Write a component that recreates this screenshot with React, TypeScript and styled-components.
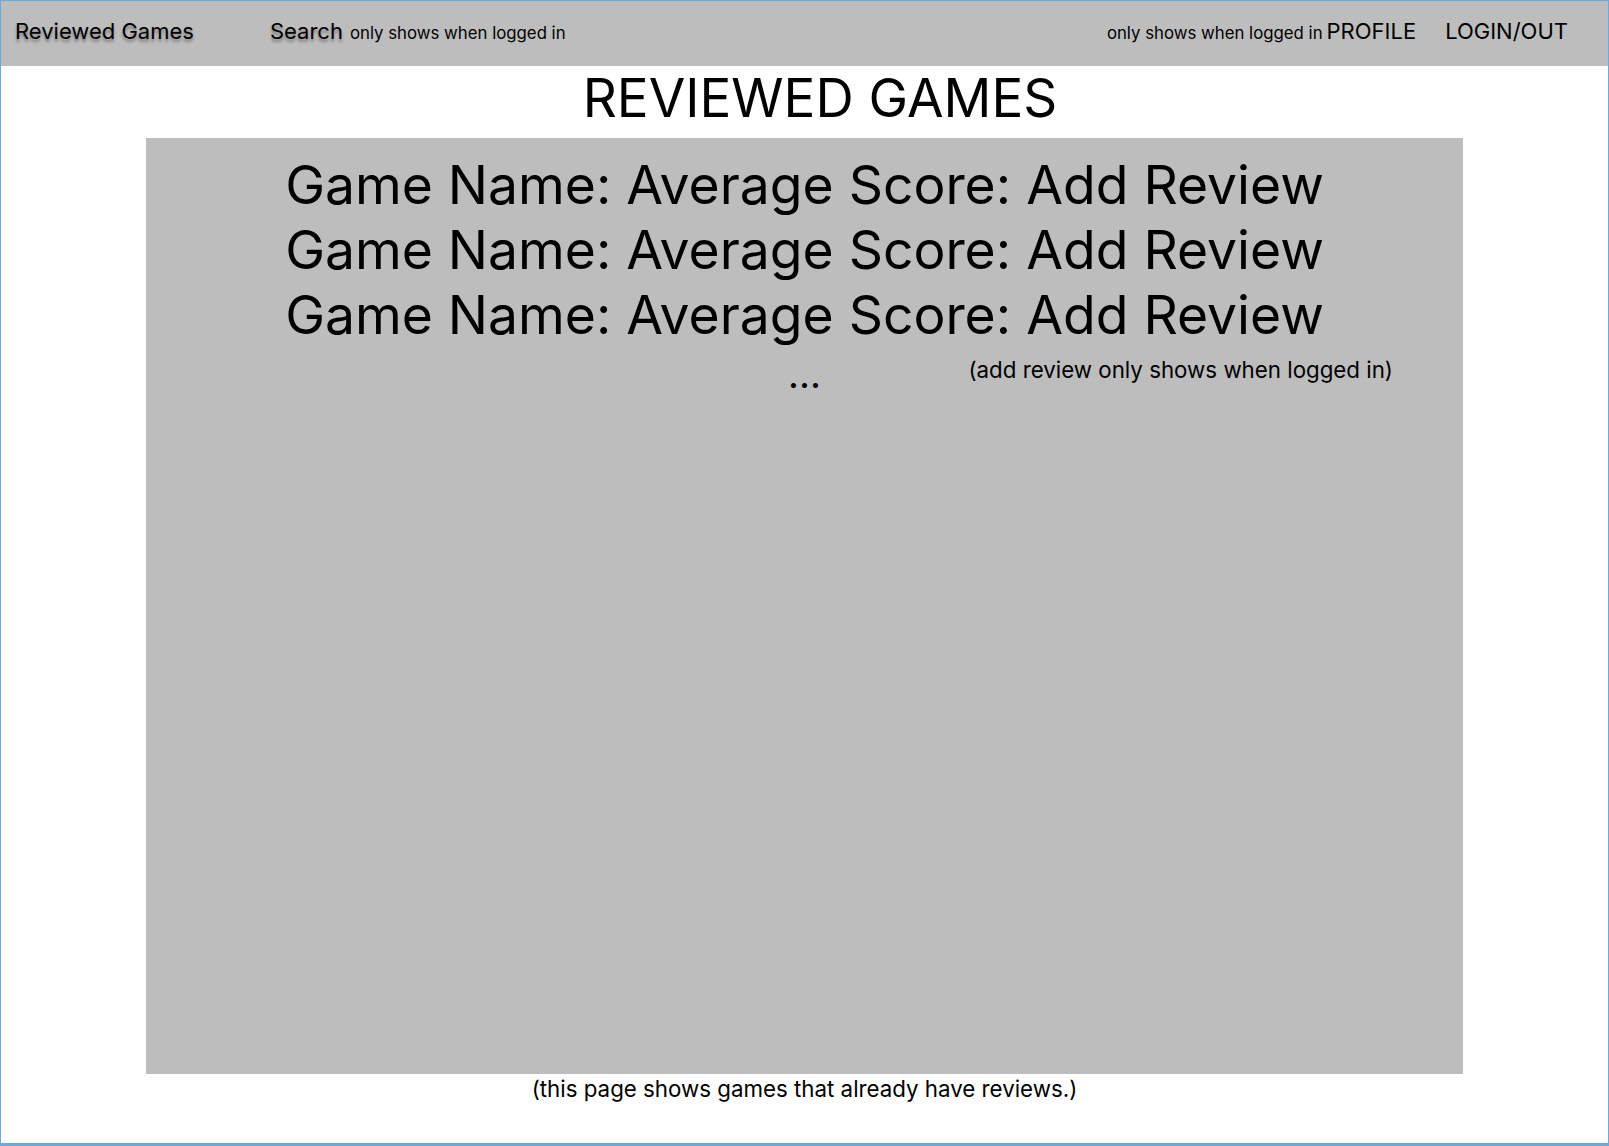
import React from "react";
import styled, { createGlobalStyle } from "styled-components";

const GlobalStyle = createGlobalStyle`
  * {
    box-sizing: border-box;
  }
  body {
    margin: 0;
    background: #ffffff;
    font-family: Inter, "Noto Sans", sans-serif;
    color: #000000;
  }
`;

const Page = styled.div`
  min-height: 100vh;
  border: 1px solid #6fa8dc;
  border-bottom-width: 3px;
  display: flex;
  flex-direction: column;
  align-items: center;
`;

const NavBar = styled.nav`
  width: 100%;
  height: 65px;
  background-color: #bdbdbd;
  display: flex;
  align-items: center;
  justify-content: space-between;
  padding: 0 40px 6px 14px;
`;

const NavGroup = styled.div`
  display: flex;
  align-items: baseline;
`;

const NavLink = styled.span<{ $shadow?: boolean; $gap?: number }>`
  font-size: 22px;
  margin-left: ${(props) => props.$gap || 0}px;
  text-shadow: ${(props) =>
    props.$shadow ? "0 3px 3px rgba(0, 0, 0, 0.35)" : "none"};
`;

const NavHint = styled.span<{ $gap?: number }>`
  font-size: 16.8px;
  margin-left: ${(props) => props.$gap || 0}px;
  margin-right: 4px;
`;

const Title = styled.h1`
  margin: 0 0 7px;
  padding-left: 31px;
  font-size: 53px;
  font-weight: 400;
  line-height: 65px;
  text-align: center;
`;

const GamesPanel = styled.section`
  width: 1317px;
  height: 936px;
  background-color: #bdbdbd;
  padding: 14px 70px 0;
  display: flex;
  flex-direction: column;
  align-items: center;
`;

const GameRow = styled.div`
  font-size: 53.4px;
  line-height: 65px;
`;

const MoreRow = styled.div`
  width: 100%;
  margin-top: 9px;
  display: grid;
  grid-template-columns: 1fr auto 1fr;
`;

const Dots = styled.span`
  grid-column: 2;
  font-size: 38px;
  line-height: 24px;
  padding-top: 6px;
`;

const PanelNote = styled.span`
  grid-column: 3;
  justify-self: end;
  font-size: 22.3px;
  line-height: 27px;
`;

const FooterNote = styled.p`
  margin: 1px 0 0;
  font-size: 22.3px;
  line-height: 27px;
`;

const games = [1, 2, 3];

function App() {
  return (
    <>
      <GlobalStyle />
      <Page>
        <NavBar>
          <NavGroup>
            <NavLink $shadow>Reviewed Games</NavLink>
            <NavLink $shadow $gap={76}>
              Search
            </NavLink>
            <NavHint $gap={7}>only shows when logged in</NavHint>
          </NavGroup>
          <NavGroup>
            <NavHint>only shows when logged in</NavHint>
            <NavLink>PROFILE</NavLink>
            <NavLink $gap={29}>LOGIN/OUT</NavLink>
          </NavGroup>
        </NavBar>
        <Title>REVIEWED GAMES</Title>
        <GamesPanel>
          {games.map((g) => (
            <GameRow key={g}>Game Name: Average Score: Add Review</GameRow>
          ))}
          <MoreRow>
            <Dots>...</Dots>
            <PanelNote>(add review only shows when logged in)</PanelNote>
          </MoreRow>
        </GamesPanel>
        <FooterNote>(this page shows games that already have reviews.)</FooterNote>
      </Page>
    </>
  );
}

export default App;
